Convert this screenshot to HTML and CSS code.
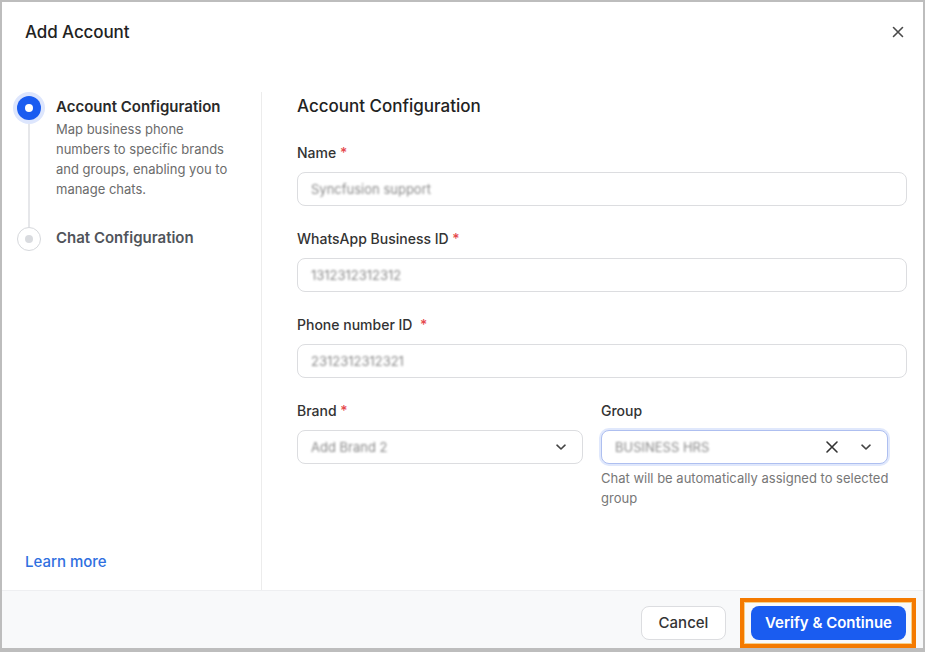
FILE: index.html
```html
<!DOCTYPE html>
<html>
<head>
<meta charset="utf-8">
<link rel="stylesheet" href="styles.css">
</head>
<body>
<div class="frame">
  <div class="header">
    <div class="title">Add Account</div>
    <svg class="close" width="14" height="14" viewBox="0 0 14 14"><path d="M2.5 2.5 L11.5 11.5 M11.5 2.5 L2.5 11.5" stroke="#4a4a4a" stroke-width="1.6" stroke-linecap="round"/></svg>
  </div>
  <div class="body">
    <div class="side">
      <div class="steps">
        <div class="step active">
          <div class="ind">
            <div class="dot-active"><span></span></div>
            <div class="line"></div>
          </div>
          <div class="step-text">
            <div class="step-title">Account Configuration</div>
            <div class="step-desc">Map business phone numbers to specific brands and groups, enabling you to manage chats.</div>
          </div>
        </div>
        <div class="step">
          <div class="ind">
            <div class="dot-idle"><span></span></div>
          </div>
          <div class="step-text">
            <div class="step-title idle">Chat Configuration</div>
          </div>
        </div>
      </div>
      <a class="learn">Learn more</a>
    </div>
    <div class="main">
      <div class="main-title">Account Configuration</div>
      <div class="field">
        <div class="label">Name <span class="req">*</span></div>
        <div class="input"><span class="val">Syncfusion support</span></div>
      </div>
      <div class="field">
        <div class="label">WhatsApp Business ID <span class="req">*</span></div>
        <div class="input"><span class="val">1312312312312</span></div>
      </div>
      <div class="field">
        <div class="label">Phone number ID &nbsp;<span class="req">*</span></div>
        <div class="input"><span class="val">2312312312321</span></div>
      </div>
      <div class="row">
        <div class="col">
          <div class="label">Brand <span class="req">*</span></div>
          <div class="input select"><span class="val">Add Brand 2</span>
            <svg class="chev" width="14" height="14" viewBox="0 0 14 14"><path d="M3 5.2 L7 9 L11 5.2" fill="none" stroke="#444" stroke-width="1.6" stroke-linecap="round" stroke-linejoin="round"/></svg>
          </div>
        </div>
        <div class="col">
          <div class="label">Group</div>
          <div class="input select focus"><span class="val">BUSINESS HRS</span>
            <svg class="clear" width="14" height="14" viewBox="0 0 14 14"><path d="M2 2 L12 12 M12 2 L2 12" stroke="#333" stroke-width="1.6" stroke-linecap="round"/></svg>
            <svg class="chev" width="14" height="14" viewBox="0 0 14 14"><path d="M3 5.2 L7 9 L11 5.2" fill="none" stroke="#444" stroke-width="1.6" stroke-linecap="round" stroke-linejoin="round"/></svg>
          </div>
          <div class="help">Chat will be automatically assigned to selected group</div>
        </div>
      </div>
    </div>
  </div>
  <div class="footer">
    <button class="btn cancel">Cancel</button>
    <div class="highlight">
      <button class="btn primary">Verify &amp; Continue</button>
    </div>
  </div>
</div>
</body>
</html>
```

FILE: styles.css
```css
* { box-sizing: border-box; }
html, body { margin: 0; padding: 0; background: #fff; }
body { font-family: Inter, "Noto Sans", "Liberation Sans", sans-serif; color: #222; }

.frame {
  width: 925px;
  height: 652px;
  border: 2px solid #bdbdbd;
  border-bottom-width: 4px;
  display: flex;
  flex-direction: column;
  background: #fff;
}

.header {
  height: 60px;
  flex: none;
  display: flex;
  align-items: center;
  justify-content: space-between;
  padding: 0 18px 0 23px;
}
.title { font-size: 17px; font-weight: 500; color: #222; letter-spacing: -0.1px; }
.close { display: block; }

.body {
  flex: 1;
  display: flex;
  margin-top: 30px;
  min-height: 0;
}

.side {
  width: 260px;
  flex: none;
  border-right: 1px solid #ececec;
  display: flex;
  flex-direction: column;
  padding: 4px 0 18px 15px;
}
.steps { display: flex; flex-direction: column; }
.step { display: flex; }
.ind {
  width: 24px;
  flex: none;
  display: flex;
  flex-direction: column;
  align-items: center;
  margin-right: 15px;
}
.dot-active {
  width: 24px; height: 24px; border-radius: 50%;
  background: #1a5cf0;
  box-shadow: 0 0 0 4px #dde6fd;
  display: flex; align-items: center; justify-content: center;
  flex: none;
}
.dot-active span { width: 8px; height: 8px; border-radius: 50%; background: #fff; }
.line { width: 2px; flex: 1; background: #e6e7ea; margin-top: 4px; }
.dot-idle {
  width: 24px; height: 24px; border-radius: 50%;
  border: 1.5px solid #d6d8dc;
  background: #fff;
  display: flex; align-items: center; justify-content: center;
  flex: none;
}
.dot-idle span { width: 8px; height: 8px; border-radius: 50%; background: #d9dbdf; }
.step-text { padding-bottom: 28px; }
.step:last-child .step-text { padding-bottom: 0; }
.step-title { font-size: 15px; font-weight: 600; line-height: 22px; color: #2a2a2a; }
.step-title.idle { color: #50545a; }
.step-desc { font-size: 13px; line-height: 20px; color: #6b6b6b; width: 180px; margin-top: 1px; }

.learn {
  margin-top: auto;
  font-size: 15px;
  line-height: 20px;
  color: #2f6fdf;
  font-weight: 500;
  margin-left: 8px;
}

.main {
  flex: 1;
  padding: 2px 16px 0 35px;
}
.main-title { font-size: 17px; line-height: 24px; font-weight: 500; color: #222; margin-bottom: 25px; }
.field { margin-bottom: 23px; }
.label { font-size: 14px; line-height: 20px; color: #333; margin-bottom: 9px; font-weight: 500; }
.req { color: #e5484d; }
.input {
  height: 34px;
  border: 1px solid #dcdde0;
  border-radius: 8px;
  display: flex;
  align-items: center;
  padding: 0 13px;
  background: #fff;
}
.val { font-size: 13px; color: #8a8a8a; filter: blur(0.9px); }
.row { display: grid; grid-template-columns: 286px 287px; column-gap: 18px; }
.select { padding-right: 14px; }
.select .val { flex: 1; }
.chev { display: block; }
.clear { display: block; margin-right: 20px; }
.focus { border-color: #aebff0; box-shadow: 0 0 0 2px #e0e8fc; }
.help { font-size: 13px; line-height: 20px; color: #777; margin-top: 4px; width: 305px; }

.footer {
  height: 58px;
  flex: none;
  background: #f8f9fa;
  border-top: 1px solid #eeeff1;
  display: flex;
  justify-content: flex-end;
  align-items: center;
  padding: 7px 7px 1px;
}
.btn {
  font-family: Inter, "Noto Sans", "Liberation Sans", sans-serif;
  font-size: 15px;
  font-weight: 500;
  height: 34px;
  border-radius: 8px;
  cursor: pointer;
}
.cancel {
  width: 85px;
  background: #fff;
  border: 1px solid #dcdde0;
  color: #333;
  margin-right: 14px;
}
.highlight {
  border: 4px solid #f47a00;
  box-shadow: inset 0 0 0 1px #f6cf8a;
  padding: 4px 6px 4px 7px;
}
.primary {
  width: 155px;
  background: #1a5cf0;
  border: none;
  color: #fff;
  font-weight: 600;
  display: block;
}
```
